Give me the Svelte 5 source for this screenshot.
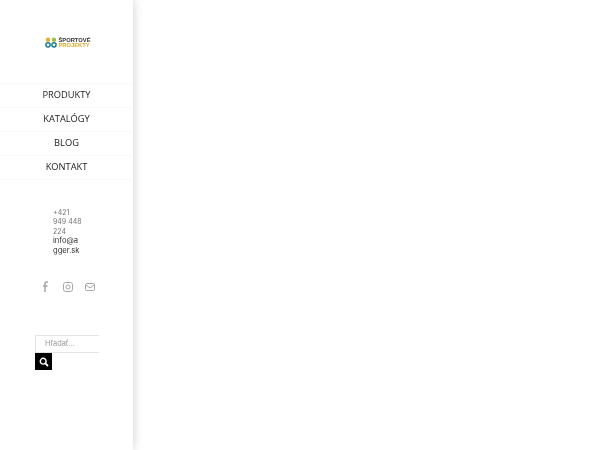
<script lang="ts">
  const menu = ['PRODUKTY', 'KATALÓGY', 'BLOG', 'KONTAKT']
</script>

<div class="page">
  <aside class="sidebar">
    <div class="logo">
      <svg width="12" height="11" viewBox="0 0 12 11">
        <circle cx="3" cy="2.7" r="2.2" fill="#e8ad35" />
        <circle cx="9" cy="2.7" r="2.2" fill="#a3b948" />
        <circle cx="3" cy="7.8" r="2.1" fill="none" stroke="#1f7f8c" stroke-width="1.5" />
        <circle cx="9" cy="7.8" r="2.1" fill="none" stroke="#1f7f8c" stroke-width="1.5" />
      </svg>
      <div class="logo-text">
        <span class="dark">ŠPORTOVÉ</span>
        <span class="gold">PROJEKTY</span>
      </div>
    </div>

    <nav class="menu">
      {#each menu as item}
        <div class="item">{item}</div>
      {/each}
    </nav>

    <div class="contact">
      <div class="phone">+421 949 448 224</div>
      <div class="mail">info@agger.sk</div>
    </div>

    <div class="social">
      <svg width="12" height="12" viewBox="0 0 12 12" fill="none" stroke="#a5a5a5">
        <path d="M8 1H6.6C5.6 1 5 1.6 5 2.6V11M3 5h4.6" stroke-width="1.5" />
      </svg>
      <svg width="12" height="12" viewBox="0 0 12 12" fill="none" stroke="#a5a5a5">
        <rect x="1.5" y="1.5" width="9" height="9" rx="2.2" />
        <circle cx="6" cy="6" r="2.1" />
      </svg>
      <svg width="12" height="12" viewBox="0 0 12 12" fill="none" stroke="#a5a5a5">
        <rect x="1.5" y="2.5" width="9" height="7" rx="1.2" />
        <path d="M1.8 4l4.2 3 4.2-3" />
      </svg>
    </div>

    <div class="search">
      <div class="field">Hľadať...</div>
      <div class="btn">
        <svg width="10" height="10" viewBox="0 0 10 10" fill="none" stroke="#fff">
          <circle cx="4.2" cy="4.2" r="2.9" stroke-width="1.4" />
          <path d="M6.4 6.4L9 9" stroke-width="1.8" />
        </svg>
      </div>
    </div>
  </aside>
</div>

<style>
  :global(body) {
    margin: 0;
    background: #fff;
  }

  .page {
    width: 600px;
    height: 450px;
    overflow: hidden;
  }

  .sidebar {
    width: 133px;
    height: 450px;
    background: #fff;
    box-shadow: 0 0 10px rgba(0, 0, 0, 0.2);
    display: flex;
    flex-direction: column;
    will-change: transform;
  }

  .logo {
    display: flex;
    align-items: center;
    justify-content: center;
    gap: 1px;
    height: 83px;
    padding: 2px 0 0 3px;
    box-sizing: border-box;
    filter: blur(0.35px);
  }

  .logo-text {
    display: flex;
    flex-direction: column;
    font-family: "Liberation Sans", sans-serif;
    font-size: 5.8px;
    font-weight: 700;
    line-height: 5px;
  }

  .dark { color: #333; }
  .gold { color: #d9a92c; }

  .menu {
    border-top: 1px solid #fafafa;
  }

  .item {
    padding-bottom: 3px;
    box-sizing: border-box;
    height: 24px;
    border-bottom: 1px solid #f8f8f8;
    display: flex;
    align-items: center;
    justify-content: center;
    font-family: "Open Sans", sans-serif;
    font-size: 9.3px;
    color: #222;
  }

  .contact {
    width: 29px;
    margin: 28px 0 0 53px;
    font-family: "Inter", sans-serif;
    line-height: 9.4px;
    overflow-wrap: anywhere;
  }

  .phone {
    font-size: 7px;
    color: #747474;
  }

  .mail {
    font-size: 7.6px;
    color: #333;
  }

  .social {
    display: flex;
    gap: 10px;
    margin: 26px 0 0 40px;
  }

  .search {
    margin: 42px 0 0 35px;
  }

  .field {
    width: 54px;
    height: 16px;
    padding-left: 9px;
    border: 1px solid #e4e4e4;
    border-right: 0;
    font-family: "Inter", sans-serif;
    font-size: 7.4px;
    line-height: 16px;
    color: #999;
  }

  .btn {
    width: 17px;
    height: 17px;
    background: #000;
    display: flex;
    align-items: center;
    justify-content: center;
  }
</style>
